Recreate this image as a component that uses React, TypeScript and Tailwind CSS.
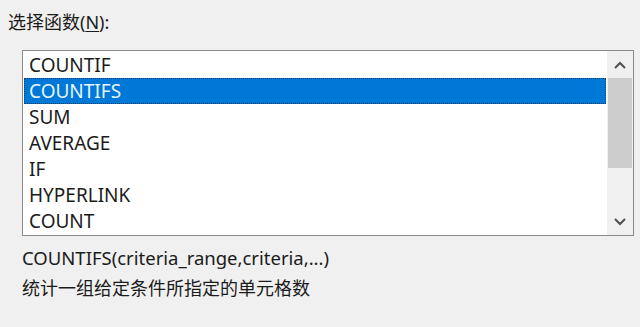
import React from 'react';

const FUNCS = ['COUNTIF', 'COUNTIFS', 'SUM', 'AVERAGE', 'IF', 'HYPERLINK', 'COUNT'];

function Chevron({ up }: { up?: boolean }) {
  return (
    <svg width="12" height="8" viewBox="0 0 12 8" fill="none">
      <path
        d={up ? 'M1 7 L6 2 L11 7' : 'M1 1 L6 6 L11 1'}
        stroke="#505050"
        strokeWidth="2"
      />
    </svg>
  );
}

export default function App() {
  return (
    <div
      className="w-[640px] h-[327px] bg-[#f0f0f0] text-[#1b1b1b] text-[18px] overflow-hidden"
      style={{ fontFamily: '"Noto Sans", "Noto Sans CJK SC", sans-serif' }}
    >
      <div className="pl-[8px] pt-[9px] h-[35px] leading-[26px]">
        选择函数(<span className="underline underline-offset-2">N</span>):
      </div>
      <div className="ml-[22px] mt-[15px] w-[612px] h-[186px] border border-[#8a8a8a] bg-white flex">
        <div className="flex-1 py-px pl-px pr-[1px] text-[19px]">
          {FUNCS.map((f, i) => (
            <div
              key={f}
              className={
                i === 1
                  ? 'h-[26px] pl-[4px] flex items-center bg-[#0078d7] text-[#e8f4ff] border border-dotted border-[#1b3f66]'
                  : 'h-[26px] pl-[5px] flex items-center'
              }
            >
              {f}
            </div>
          ))}
        </div>
        <div className="w-[26px] bg-[#f0f0f0] flex flex-col">
          <div className="h-[27px] flex items-center justify-center">
            <Chevron up />
          </div>
          <div className="flex-1 px-[1px]">
            <div className="h-[90px] bg-[#cdcdcd]" />
          </div>
          <div className="h-[27px] flex items-center justify-center">
            <Chevron />
          </div>
        </div>
      </div>
      <div className="pl-[22px] mt-[7px] leading-[30px] text-[18.5px]">COUNTIFS(criteria_range,criteria,...)</div>
      <div className="pl-[22px] leading-[30px]">统计一组给定条件所指定的单元格数</div>
    </div>
  );
}
